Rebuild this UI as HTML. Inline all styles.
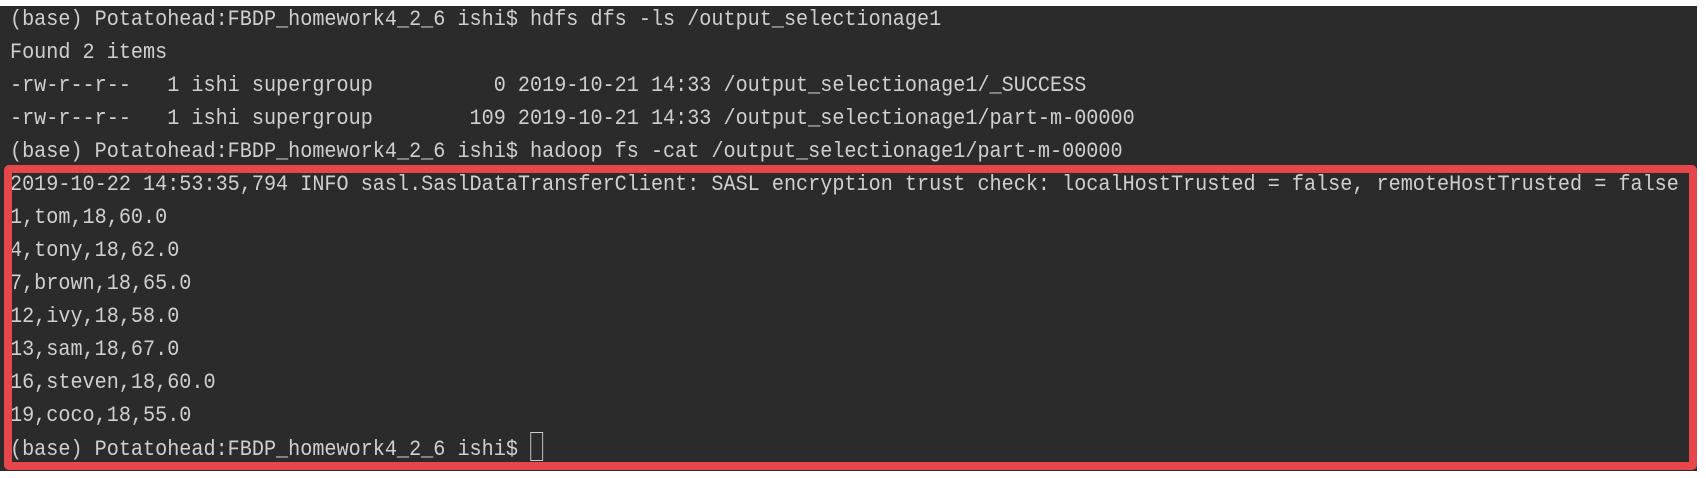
<!DOCTYPE html>
<html><head><meta charset="utf-8"><style>
html,body{margin:0;padding:0;background:#fff;width:1706px;height:478px;overflow:hidden}
.term{position:absolute;left:0;top:6px;width:1697px;height:465px;background:#2b2b2b}
.txt{position:absolute;left:10px;top:3px;margin:0;font-family:"Liberation Mono",monospace;font-size:22px;line-height:33px;color:#cfcfcf;white-space:pre;transform:scaleX(0.916);transform-origin:0 0}
.box{position:absolute;left:4px;top:165px;width:1677px;height:289px;border:8px solid #e5474b;border-radius:5px}
.cur{display:inline-block;width:12px;height:27px;border:1.5px solid #cfcfcf;vertical-align:-6px}
</style></head><body>
<div class="term"></div>
<pre class="txt">(base) Potatohead:FBDP_homework4_2_6 ishi$ hdfs dfs -ls /output_selectionage1
Found 2 items
-rw-r--r--   1 ishi supergroup          0 2019-10-21 14:33 /output_selectionage1/_SUCCESS
-rw-r--r--   1 ishi supergroup        109 2019-10-21 14:33 /output_selectionage1/part-m-00000
(base) Potatohead:FBDP_homework4_2_6 ishi$ hadoop fs -cat /output_selectionage1/part-m-00000
2019-10-22 14:53:35,794 INFO sasl.SaslDataTransferClient: SASL encryption trust check: localHostTrusted = false, remoteHostTrusted = false
1,tom,18,60.0
4,tony,18,62.0
7,brown,18,65.0
12,ivy,18,58.0
13,sam,18,67.0
16,steven,18,60.0
19,coco,18,55.0
(base) Potatohead:FBDP_homework4_2_6 ishi$ <span class="cur"></span></pre>
<div class="box"></div>
</body></html>
